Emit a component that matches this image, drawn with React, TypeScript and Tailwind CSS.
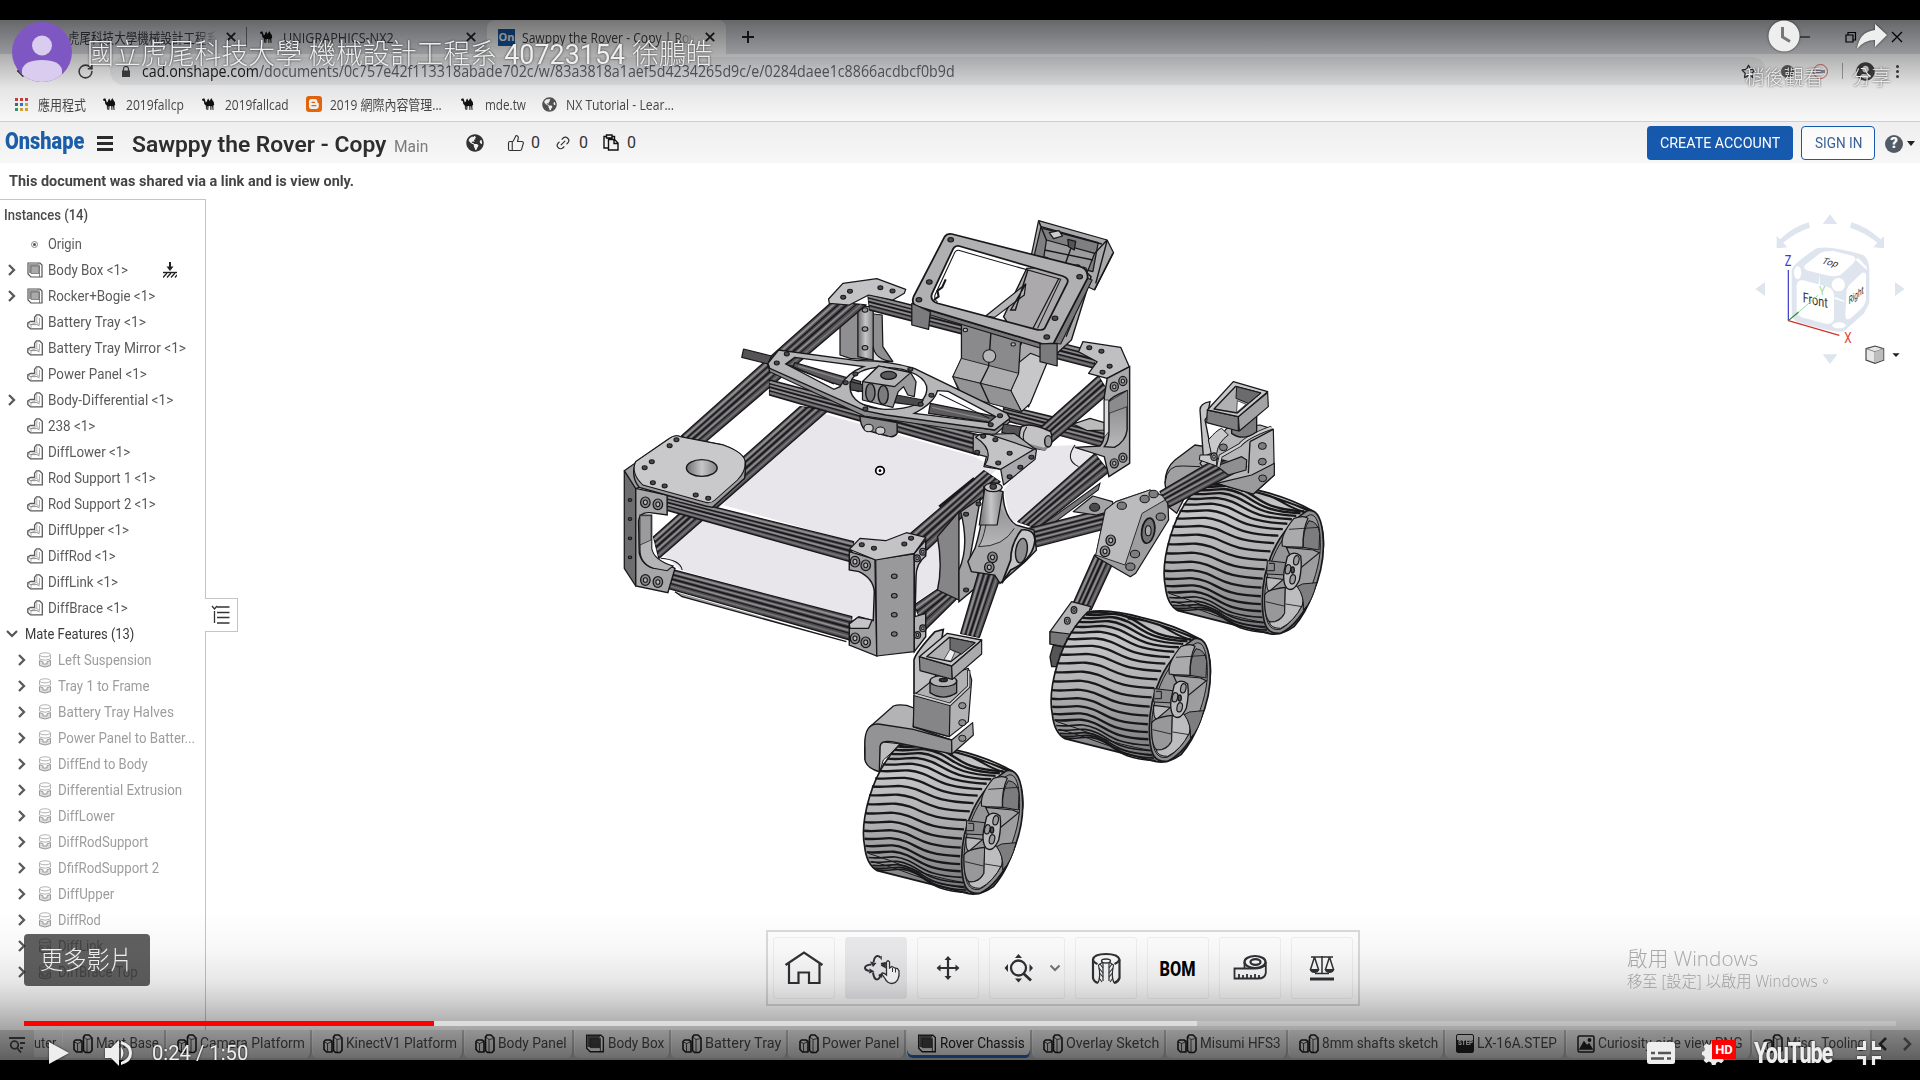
import { useLayoutEffect, useRef, useState } from "react";
import type { ReactNode } from "react";
import { FaGlobeAmericas, FaRegStar, FaUserCircle } from "react-icons/fa";
import { ThumbsUp, Link2, RotateCw, ArrowLeft } from "lucide-react";

/* A line of text condensed or widened to a given width. */
function Fit({ w, children, className = "" }: { w: number; children: ReactNode; className?: string }) {
  const ref = useRef<HTMLSpanElement>(null);
  const [s, setS] = useState(1);
  useLayoutEffect(() => {
    if (ref.current && ref.current.offsetWidth) setS(w / ref.current.offsetWidth);
  }, [w]);
  return (
    <span className={"block shrink-0 whitespace-nowrap " + className} style={{ width: w }}>
      <span ref={ref} className="inline-block origin-left whitespace-nowrap" style={{ transform: `scaleX(${s})` }}>
        {children}
      </span>
    </span>
  );
}

type P = [number, number];
const pts = (a: P[]) => a.map((p) => p.join(",")).join(" ");
const K = "#18171a";

function Poly({ p, f = "#a9a8aa", s = 3.5 }: { p: P[]; f?: string; s?: number }) {
  return <polygon points={pts(p)} fill={f} stroke={K} strokeWidth={s} strokeLinejoin="round" />;
}

/* Slotted aluminium extrusion: a-b and d-c are the long edges. */
function Beam({ a, b, c, d }: { a: P; b: P; c: P; d: P }) {
  const lerp = (u: P, v: P, t: number): P => [u[0] + (v[0] - u[0]) * t, u[1] + (v[1] - u[1]) * t];
  const lines: [number, string, number][] = [
    [0.13, "#8f8d90", 6], [0.25, K, 3.5], [0.36, "#8a888b", 4], [0.48, K, 5],
    [0.61, "#8f8d90", 5], [0.72, K, 3], [0.86, "#757376", 5],
  ];
  return (
    <g>
      <Poly p={[a, b, c, d]} f="#504e51" s={4} />
      {lines.map(([t, col, w], i) => {
        const u = lerp(a, d, t);
        const v = lerp(b, c, t);
        return <line key={i} x1={u[0]} y1={u[1]} x2={v[0]} y2={v[1]} stroke={col} strokeWidth={w} />;
      })}
    </g>
  );
}

function Holes({ p, r = 7, f = "#4a494b" }: { p: P[]; r?: number; f?: string }) {
  return (
    <g>
      {p.map(([x, y], i) => (
        <ellipse key={i} cx={x} cy={y} rx={r} ry={r * 0.85} fill={f} stroke={K} strokeWidth={3} />
      ))}
    </g>
  );
}

function Bolts({ p, r = 14 }: { p: P[]; r?: number }) {
  return (
    <g>
      {p.map(([x, y], i) => (
        <g key={i}>
          <ellipse cx={x} cy={y} rx={r * 0.95} ry={r * 1.15} fill="#8b898c" stroke={K} strokeWidth={3.5} />
          <ellipse cx={x} cy={y} rx={r * 0.4} ry={r * 0.5} fill="#bbb" stroke={K} strokeWidth={3} />
        </g>
      ))}
    </g>
  );
}

const bez = (p: P[], t: number): P => {
  const u = 1 - t;
  const k = [u * u * u, 3 * u * u * t, 3 * u * t * t, t * t * t];
  return [p.reduce((s, q, i) => s + q[0] * k[i], 0), p.reduce((s, q, i) => s + q[1] * k[i], 0)];
};

function Wheel({ x, y }: { x: number; y: number }) {
  const L: P[] = [[240, 556], [120, 650], [105, 880], [172, 932]];
  const R: P[] = [[556, 632], [430, 680], [388, 930], [446, 1001]];
  const n = 21;
  const treads = Array.from({ length: n }, (_, i) => {
    const s = (i + 0.5) / n;
    const t = s * 0.55 + ((1 - Math.cos(Math.PI * s)) / 2) * 0.45;
    const l = bez(L, t);
    const r = bez(R, t);
    const dx = r[0] - l[0];
    const dy = r[1] - l[1];
    const q = (a: number, b: number) => `${l[0] + dx * a} ${l[1] + dy * b}`;
    return {
      d: `M${q(0, 0)} C${q(0.2, 0.1)} ${q(0.24, -0.22)} ${q(0.43, 0.16)} C${q(0.58, 0.48)} ${q(0.62, 0.92)} ${q(1, 1)}`,
      w: s > 0.74 ? 5 : 7,
    };
  });
  return (
    <g transform={`translate(${x} ${y})`}>
      <path d="M240 552 C150 640 120 790 134 860 Q140 915 172 932 L446 1001 Q480 1008 520 980 Q590 900 608 740 Q612 670 575 632 Q500 590 400 568 Q300 540 240 552Z" fill="url(#tread)" stroke={K} strokeWidth={5} />
      {treads.map((t, i) => (
        <path key={i} d={t.d} fill="none" stroke={K} strokeWidth={t.w} />
      ))}
      <path d="M238 556 Q300 548 400 574 T582 642 M262 551 Q380 558 575 634 M360 572 Q430 575 480 604 T566 640" fill="none" stroke={K} strokeWidth={5.5} />
      <path d="M155 905 Q200 915 280 945 T440 985 M145 880 Q210 900 270 925 T432 968" fill="none" stroke={K} strokeWidth={3} />
      <path d="M560 632 C470 690 425 800 425 900 C425 990 445 1003 480 1000 C560 960 612 820 608 725 C606 660 590 625 560 632Z" fill="#8d8c8e" stroke={K} strokeWidth={5} />
      <path d="M566 645 C480 690 433 800 432 895 C432 975 450 992 478 988 C540 960 602 820 599 728 C598 675 588 640 566 645Z" fill="url(#rimg)" stroke={K} strokeWidth={3} />
      <path d="M485 738 Q478 705 520 655 Q550 645 562 655 Q545 690 547 742 L497 740Z" fill="#aaa9ab" stroke={K} strokeWidth={3.5} />
      <path d="M565 662 Q592 665 597 700 L595 750 L548 742 Q546 690 565 662Z" fill="#7c7b7d" stroke={K} strokeWidth={3} />
      <path d="M505 688 L595 682" stroke={K} strokeWidth={2.5} fill="none" />
      <path d="M497 742 L578 750 L596 758 L538 805 L510 770Z" fill="#a2a1a3" stroke={K} strokeWidth={3.5} />
      <path d="M440 782 L495 788 L498 825 L438 822Z" fill="#8a898b" stroke={K} strokeWidth={3} />
      <path d="M445 790 h16 v22 h-20" fill="none" stroke={K} strokeWidth={3} />
      <path d="M438 832 L488 838 L446 874 Q436 870 438 832Z" fill="#b9b8ba" stroke={K} strokeWidth={3.5} />
      <path d="M432 885 Q440 868 494 862 L492 940 Q475 968 448 966 Q430 955 432 885Z" fill="#98979a" stroke={K} strokeWidth={3.5} />
      <path d="M494 862 L530 858 Q552 890 545 915 Q520 965 480 985 Q450 985 446 966 Q480 968 492 940Z" fill="#bdbcbe" stroke={K} strokeWidth={3} />
      <path d="M545 852 L588 848 Q575 905 548 930 Q552 890 530 860Z" fill="#7d7c7e" stroke={K} strokeWidth={3} />
      <path d="M495 912 L545 920 M435 905 L490 918" stroke={K} strokeWidth={2.5} />
      <path d="M500 770 Q520 750 540 768 Q545 800 536 840 Q518 880 498 864 Q486 850 490 815Z" fill="#bab9bb" stroke={K} strokeWidth={4} />
      {[[527, 781], [502, 808], [516, 838]].map(([a, b]) => (
        <ellipse key={a} cx={a} cy={b} rx={8} ry={14} transform={`rotate(12 ${a} ${b})`} fill="#9d9c9e" stroke={K} strokeWidth={3.5} />
      ))}
      <ellipse cx={516} cy={810} rx={5} ry={9} fill="#555" stroke={K} strokeWidth={4} />
    </g>
  );
}

function Rover() {
  return (
    <svg viewBox="600 200 760 720" width={760} height={720} className="block">
      <defs>
        <linearGradient id="tread" x1="0" y1="0" x2="0.1" y2="1">
          <stop offset="0" stopColor="#969597" /><stop offset=".2" stopColor="#c6c5c7" />
          <stop offset=".55" stopColor="#afaeb0" /><stop offset="1" stopColor="#7a797b" />
        </linearGradient>
        <linearGradient id="rimg" x1="0" y1="0" x2="1" y2="1">
          <stop offset="0" stopColor="#8d8c8e" /><stop offset="1" stopColor="#a5a4a6" />
        </linearGradient>
        <linearGradient id="shade" x1="0" y1="0" x2="1" y2="0">
          <stop offset="0" stopColor="#6f6e70" /><stop offset=".5" stopColor="#c6c5c7" /><stop offset="1" stopColor="#858486" />
        </linearGradient>
        <linearGradient id="vert" x1="0" y1="0" x2="0" y2="1">
          <stop offset="0" stopColor="#828183" /><stop offset="1" stopColor="#b8b7b9" />
        </linearGradient>
      </defs>

      {/* chassis */}
      <g transform="translate(600 200) scale(.357143 .333333)">
        <polygon points="622,640 1050,770 1110,810 880,1020 720,1030 345,915 380,860" fill="#e8e6ea" />
        <polygon points="280,955 700,1085 770,1130 770,1270 225,1110 180,1065" fill="#e8e6ea" />
        <polygon points="1330,735 1390,775 1210,960 1150,965 1130,870 1220,740" fill="#e8e6ea" />
        <polygon points="880,1060 950,1020 950,1160 885,1205" fill="#e8e6ea" />
        <path d="M1330 735 Q1300 780 1340 800 M170 1075 Q225 1080 230 1110" fill="none" stroke={K} strokeWidth={3} />

        {/* rear-left post */}
        <Poly p={[[672, 330], [790, 345], [792, 440], [820, 485], [700, 475], [672, 465]]} f="#8f8e90" />
        <Poly p={[[722, 320], [765, 320], [765, 480], [722, 470]]} f="url(#shade)" />
        <path d="M765 440 Q770 480 820 485 L765 482Z" fill="#ddd" stroke={K} strokeWidth={3} />
        <Holes p={[[742, 330], [742, 387], [742, 443]]} r={8} f="#999" />

        <Beam a={[150, 1010]} b={[560, 620]} c={[640, 630]} d={[165, 1075]} />
        <Beam a={[228, 708]} b={[650, 305]} c={[745, 315]} d={[285, 735]} />
        <Beam a={[750, 282]} b={[1385, 455]} c={[1385, 505]} d={[755, 330]} />
        <Poly p={[[640, 297], [680, 250], [775, 236], [856, 268], [852, 280], [820, 300], [752, 285], [698, 315], [642, 310]]} f="#c3c2c4" />
        <Holes p={[[700, 274], [785, 263], [819, 273], [681, 292]]} />

        <Beam a={[475, 540]} b={[1060, 705]} c={[1060, 765]} d={[475, 585]} />
        <Beam a={[1130, 615]} b={[1420, 690]} c={[1420, 745]} d={[1130, 660]} />
        <Poly p={[[1325, 672], [1372, 655], [1412, 668], [1412, 690], [1365, 692]]} f="#bbb" />
        <Beam a={[1170, 965]} b={[1385, 762]} c={[1425, 815]} d={[1225, 985]} />
        <path d="M1225 985 L1400 850 L1395 870 L1250 985" fill="#777" stroke={K} strokeWidth={3} />
        <Beam a={[1215, 700]} b={[1395, 528]} c={[1425, 580]} d={[1262, 730]} />

        {/* rear-right corner */}
        <Poly p={[[1340, 455], [1352, 425], [1458, 442], [1482, 500], [1420, 535], [1368, 520], [1392, 485]]} f="#bfbec0" />
        <path d="M1420 535 L1483 500 L1483 790 L1425 830 L1412 770 L1330 742 L1400 738 Q1412 725 1412 700 L1412 590Z" fill="#a9a8aa" stroke={K} strokeWidth={4} />
        <path d="M1425 605 Q1430 590 1476 572 L1476 690 Q1472 725 1440 742 L1412 740 Q1425 722 1425 695Z" fill="url(#vert)" stroke={K} strokeWidth={4} />
        <path d="M1476 620 L1425 640 V605 L1476 572" fill="#8b8a8c" stroke={K} strokeWidth={2} />
        <path d="M1412 600 L1424 600 L1424 695 L1412 712Z" fill="#ddd" stroke={K} strokeWidth={2} />
        <Holes p={[[1370, 443], [1404, 454], [1427, 499], [1407, 517]]} />
        <Bolts p={[[1440, 560], [1464, 543], [1440, 790], [1464, 773]]} r={12} />

        {/* mast head */}
        <Poly p={[[1228, 62], [1420, 120], [1438, 158], [1385, 270], [1205, 180]]} f="#a9a8aa" />
        <Poly p={[[1235, 80], [1395, 128], [1380, 215], [1215, 170]]} f="#7f7e80" />
        <Poly p={[[1250, 120], [1385, 160], [1365, 215], [1240, 190]]} f="#9c9b9d" />
        <path d="M1228 62 L1250 120 M1420 120 L1385 160 M1420 122 L1388 250 M1436 160 L1385 268 M1325 125 L1300 200 M1245 150 L1380 180 M1240 85 L1405 132" fill="none" stroke={K} strokeWidth={4} />
        <Poly p={[[1258, 98], [1285, 92], [1295, 108], [1270, 116]]} f="#ccc" />
        <Poly p={[[1310, 118], [1332, 124], [1328, 150], [1312, 140]]} f="#555" />
        <Bolts p={[[1247, 185], [1353, 215]]} r={12} />
        <path d="M1195 205 L1340 195 L1375 230 L1320 420 L1240 500 L1200 620 L1120 560 L1180 430 L1130 350Z" fill="#aba9ac" stroke={K} strokeWidth={4} />
        <Poly p={[[1080, 348], [1192, 252], [1188, 285], [1105, 352]]} f="#b5b4b6" />
        <path d="M1192 252 L1150 330 L1163 330 L1198 210" fill="none" stroke={K} strokeWidth={4} />
        <path d="M1360 240 L1290 420 M1372 245 L1325 345 L1328 350 L1305 410 M1285 235 L1210 390" fill="none" stroke={K} strokeWidth={3.5} />

        {/* mast foot */}
        <Poly p={[[1170, 490], [1205, 460], [1255, 480], [1205, 610], [1180, 635], [1150, 575]]} f="#c7c6c8" />
        <Poly p={[[1012, 365], [1178, 415], [1172, 520], [1150, 572], [1180, 635], [1010, 585], [988, 530], [1012, 475]]} f="#8a898b" />
        <Poly p={[[1012, 475], [1172, 520], [1150, 572], [988, 530]]} f="#adacae" s={2.5} />
        <Poly p={[[988, 530], [1150, 572], [1180, 635], [1015, 588]]} f="#939294" s={2.5} />
        <path d="M1095 390 L1088 500 L1065 550 L1090 608" fill="none" stroke={K} strokeWidth={4} />
        <ellipse cx={1090} cy={468} rx={18} ry={19} fill="#b5b4b6" stroke={K} strokeWidth={3} />
        <Holes p={[[1023, 390], [1157, 433]]} r={6} f="#bbb" />

        {/* camera frame */}
        <path d="M882 318 L1240 432 L1235 445 L885 332Z M1365 235 L1378 240 L1290 432 L1270 430Z" fill="#777678" stroke={K} strokeWidth={3} />
        <path fillRule="evenodd" d="M985 102 L1345 200 Q1368 208 1365 235 L1270 430 L1240 432 L890 320 Q870 312 878 290 L965 110 Q972 100 985 102Z M1005 138 L1295 228 Q1315 235 1308 250 L1245 385 Q1238 393 1220 388 L945 310 Q922 300 930 280 L985 155 Q992 135 1005 138Z" fill="#b0afb1" stroke={K} strokeWidth={5} />
        <path d="M1004 151 L1290 238 L1225 385 M1004 151 Q995 150 990 165 L938 285 Q935 298 945 306" fill="none" stroke={K} strokeWidth={3} />
        <Holes p={[[982, 119], [922, 246], [893, 299], [1343, 230], [1274, 355], [1251, 411]]} r={8} />
        <path d="M935 300 L948 290 L945 272 L958 262 L968 238" fill="none" stroke={K} strokeWidth={6} />
        <Poly p={[[873, 310], [925, 335], [920, 388], [873, 375]]} f="#7b7a7c" />
        <Poly p={[[1232, 432], [1280, 430], [1280, 498], [1232, 485]]} f="#7b7a7c" />

        {/* differential */}
        <Poly p={[[402, 447], [480, 468], [470, 492], [397, 472]]} f="#555356" />
        <Poly p={[[545, 488], [730, 545], [725, 575], [650, 548], [540, 503]]} f="#5c5a5d" />
        <Poly p={[[925, 610], [1110, 650], [1095, 668], [920, 640]]} f="#5c5a5d" />
        <path d="M555 498 L700 545 M930 622 L1090 660" stroke="#858386" strokeWidth={4} />
        <path d="M470 492 L475 515 L740 648 L1105 705 L1148 665 L1140 650 L1105 690 L740 630Z" fill="#8d8c8e" stroke={K} strokeWidth={3.5} />
        <path fillRule="evenodd" d="M500 450 L720 482 Q800 480 880 505 L1140 640 L1148 655 L1105 690 L800 645 L740 632 L475 505 L470 490Z M520 492 L545 472 L738 500 Q690 520 672 560 L655 568Z M700 560 C700 520 745 500 800 502 C870 504 918 535 915 570 C912 610 870 628 800 628 C740 626 700 600 700 560Z M880 640 Q935 610 945 572 L975 574 L1108 650 L1088 668Z" fill="#b6b5b7" stroke={K} strokeWidth={4} />
        <path d="M530 495 L655 552 M950 582 L1090 655" fill="none" stroke={K} strokeWidth={3} />
        <Poly p={[[700, 545], [740, 555], [738, 575], [702, 570]]} f="#4c4a4d" />
        <Poly p={[[830, 585], [905, 600], [895, 618], [825, 608]]} f="#4c4a4d" />
        <Poly p={[[735, 545], [780, 498], [870, 518], [885, 545], [880, 590], [862, 585], [850, 560], [835, 575], [820, 622], [735, 600]]} f="#9a999b" />
        <Poly p={[[735, 545], [780, 498], [870, 518], [825, 560]]} f="#b5b4b6" />
        <ellipse cx={808} cy={526} rx={22} ry={12} fill="#59585a" stroke={K} strokeWidth={4} />
        <ellipse cx={757} cy={578} rx={13} ry={27} fill="#7b7a7c" stroke={K} strokeWidth={4} />
        <ellipse cx={793} cy={585} rx={14} ry={28} fill="#7b7a7c" stroke={K} strokeWidth={4} />
        <path d="M728 648 L832 668 V700 Q822 715 805 708 L742 690 Q728 675 728 648Z" fill="#8b8a8c" stroke={K} strokeWidth={4} />
        <Holes p={[[523, 462], [495, 489], [715, 522], [688, 548], [869, 508], [928, 586], [898, 613], [743, 627], [1120, 647], [1094, 674]]} />
        <Holes p={[[752, 684], [785, 692]]} r={13} f="#ccc" />
        <Poly p={[[1130, 672], [1185, 682], [1175, 710], [1125, 697]]} f="#555356" />
        <path d="M1180 680 Q1205 665 1262 695 Q1272 725 1245 750 L1190 740 Q1165 715 1180 680Z" fill="#c3c2c4" stroke={K} strokeWidth={4} />
        <path d="M1200 735 L1245 748 L1262 725" stroke="#8b8a8c" strokeWidth={8} fill="none" />
        <ellipse cx={1255} cy={724} rx={10} ry={17} fill="#999" stroke={K} strokeWidth={4} />
        <path d="M1195 680 Q1175 710 1195 740" fill="none" stroke={K} strokeWidth={3} />

        {/* right-hand rail and side joint */}
        <Beam a={[870, 1000]} b={[1075, 812]} c={[1120, 845]} d={[915, 1050]} />
        <path d="M950 920 L1048 835" stroke={K} strokeWidth={8} />
        <Poly p={[[1045, 705], [1160, 700], [1222, 750], [1218, 778], [1130, 855], [1122, 808], [1075, 800], [1082, 770], [1045, 760]]} f="#a9a8aa" />
        <path d="M1052 712 Q1060 700 1090 703 L1215 748 L1122 808 L1078 795 Q1105 750 1052 712Z" fill="#c3c2c4" stroke={K} strokeWidth={3.5} />
        <Holes p={[[1073, 709], [1107, 719], [1147, 760], [1115, 789], [1208, 772], [1177, 802], [1147, 830], [1056, 757]]} />
        <Beam a={[880, 1215]} b={[970, 1150]} c={[1000, 1195]} d={[910, 1290]} />
        <path d="M1005 935 L945 1010 Q960 1100 945 1170 L1005 1200Z" fill="#858486" stroke={K} strokeWidth={4} />
        <path d="M1065 895 L1010 935 Q1035 1040 1005 1110 L1005 1205 L1050 1165 L1060 1120 L1035 1080Z" fill="#a3a2a4" stroke={K} strokeWidth={4} />
        <Holes p={[[1025, 943], [1060, 912], [1025, 1170]]} />

        {/* suspension arms */}
        <Beam a={[1200, 985]} b={[1420, 925]} c={[1420, 985]} d={[1205, 1045]} />
        <Beam a={[1062, 1110]} b={[1010, 1300]} c={[1062, 1312]} d={[1128, 1110]} />
        <Beam a={[1385, 1065]} b={[1325, 1210]} c={[1375, 1230]} d={[1440, 1080]} />
        <path d="M1075 860 L1128 875 Q1130 950 1165 975 L1215 990 L1222 1050 L1190 1085 L1120 1150 L1105 1125 L1040 1115 L1030 1085 L1050 1045 Q1075 960 1075 860Z" fill="#a9a8aa" stroke={K} strokeWidth={4} />
        <path d="M1090 870 Q1085 1000 1060 1040 Q1130 1040 1160 985" fill="url(#vert)" stroke={K} strokeWidth={2.5} />
        <Poly p={[[1078, 860], [1128, 875], [1112, 975], [1062, 975]]} f="url(#shade)" />
        <ellipse cx={1101} cy={862} rx={25} ry={13} fill="#c6c5c7" stroke={K} strokeWidth={4} />
        <Holes p={[[1101, 860]]} r={9} />
        <path d="M1180 990 Q1215 985 1218 1020 Q1212 1080 1150 1110 L1125 1150 L1150 1080 Q1150 1030 1180 990Z" fill="#c6c5c7" stroke={K} strokeWidth={5} />
        <ellipse cx={1180} cy={1052} rx={16} ry={37} transform="rotate(8 1180 1052)" fill="#8d8c8e" stroke={K} strokeWidth={4} />
        <Bolts p={[[1099, 1072], [1090, 1102]]} />

        <Poly p={[[1325, 935], [1380, 888], [1435, 905], [1440, 930], [1390, 945]]} f="#a4a3a5" />
        <Holes p={[[1385, 922]]} r={14} />
        <Poly p={[[1415, 930], [1445, 905], [1540, 870], [1590, 895], [1592, 960], [1500, 1120], [1485, 1130], [1388, 1070]]} f="#9e9da0" />
        <Poly p={[[1415, 930], [1445, 905], [1540, 870], [1590, 895], [1518, 940], [1470, 1095], [1388, 1065]]} f="#bbbabc" s={2.5} />
        <ellipse cx={1535} cy={992} rx={18} ry={38} transform="rotate(8 1535 992)" fill="#737274" stroke={K} strokeWidth={5} />
        <ellipse cx={1535} cy={992} rx={8} ry={15} fill="#aaa" stroke={K} strokeWidth={3} />
        <Bolts p={[[1430, 1021], [1414, 1054]]} />
        <Holes p={[[1461, 917], [1525, 897], [1550, 882], [1498, 1062], [1485, 1100], [1570, 950]]} r={13} f="#7d7c7e" />

        {/* front-left post */}
        <Beam a={[185, 885]} b={[710, 1025]} c={[700, 1085]} d={[185, 930]} />
        <path d="M210 1175 L230 1190 L690 1325" stroke={K} strokeWidth={4} fill="#999" />
        <Beam a={[190, 1105]} b={[705, 1250]} c={[700, 1320]} d={[190, 1165]} />
        <Poly p={[[68, 812], [100, 860], [100, 1158], [68, 1105]]} f="#6d6c6e" />
        <path fillRule="evenodd" d="M100 865 L188 885 V945 L140 938 Q110 935 108 965 L110 1060 Q120 1100 155 1105 L190 1095 L210 1105 L190 1178 L100 1158Z" fill="#a7a6a8" stroke={K} strokeWidth={4} />
        <path d="M112 945 L145 945 L145 1045 Q150 1080 205 1098 L188 1112 L150 1105 Q112 1090 112 1050Z" fill="#b5b4b6" stroke={K} strokeWidth={3} />
        <Poly p={[[112, 947], [143, 947], [143, 1020], [112, 1035]]} f="#9b9a9c" s={2} />
        <Holes p={[[84, 900], [84, 957], [84, 1015], [84, 1072]]} r={5} />
        <Bolts p={[[127, 907], [162, 913], [127, 1140], [162, 1146]]} />
        <Poly p={[[68, 812], [98, 790], [110, 862], [100, 866]]} f="#9d9c9e" />
        <path d="M100 785 L195 715 Q210 703 225 710 L345 735 Q410 760 408 800 L405 835 L315 922 L295 918 L110 862 Q85 830 100 785Z" fill="#9d9c9e" stroke={K} strokeWidth={4} />
        <path d="M100 785 L195 715 Q210 703 225 710 L345 735 Q410 760 406 790 Q408 815 385 840 L322 900 Q310 912 295 907 L120 855 Q85 820 100 785Z" fill="#c9c8ca" stroke={K} strokeWidth={3} />
        <ellipse cx={285} cy={804} rx={43} ry={25} fill="url(#shade)" stroke={K} strokeWidth={4} />
        <Holes p={[[214, 719], [195, 737], [145, 785], [125, 803], [148, 848], [181, 858], [268, 885], [303, 895]]} />

        {/* front-right post */}
        <path d="M698 1055 L770 1078 L775 1368 L698 1335 L698 1270 L725 1250 L765 1262 L768 1175 Q765 1135 725 1115 L698 1110Z" fill="#a1a0a2" stroke={K} strokeWidth={4} />
        <Poly p={[[698, 1272], [722, 1252], [762, 1260], [752, 1285], [700, 1285]]} f="#c4c3c5" />
        <Poly p={[[772, 1078], [880, 1062], [880, 1355], [775, 1368]]} f="#99989a" />
        <path d="M880 1060 L912 1020 L912 1068 Q885 1090 885 1130 L882 1250 L912 1240 L912 1310 L880 1355Z" fill="#b3b2b4" stroke={K} strokeWidth={4} />
        <Poly p={[[698, 1048], [728, 1015], [800, 1022], [858, 998], [912, 1012], [880, 1060], [772, 1080]]} f="#c3c2c4" />
        <Holes p={[[733, 1034], [767, 1045], [852, 1032], [871, 1015]]} />
        <Holes p={[[824, 1129], [824, 1187], [824, 1244], [824, 1302]]} r={8} f="#777" />
        <Bolts p={[[714, 1085], [744, 1096], [714, 1315], [744, 1327]]} />
        <Bolts p={[[888, 1075], [904, 1055], [889, 1305], [904, 1285]]} r={9} />

        <ellipse cx={784} cy={812} rx={12} ry={12} fill="#fff" stroke="#000" strokeWidth={5} />
        <circle cx={784} cy={812} r={4} fill="#000" />
      </g>

      {/* rear steering bracket */}
      <g transform="translate(1100 360) scale(.333333)">
        <path d="M195 370 Q195 325 225 300 L285 255 L330 262 L330 370 L260 400 L230 460 L205 440Z" fill="#a09fa1" stroke={K} strokeWidth={4} />
        <path d="M195 370 Q200 312 250 318 L300 320" fill="none" stroke={K} strokeWidth={3} />
      </g>
      <g transform="translate(820 560) scale(.333333)">
        <Wheel x={902} y={-780} />
      </g>
      <g transform="translate(1100 360) scale(.333333)">
        <Poly p={[[330, 270], [380, 205], [480, 195], [520, 208], [523, 345], [460, 402], [350, 370], [300, 310]]} f="#b7b6b8" />
        <Poly p={[[350, 370], [455, 345], [523, 310], [523, 345], [460, 402]]} f="#9a999b" />
        <path d="M450 245 L520 208 M450 245 L445 340" stroke={K} strokeWidth={4} fill="none" />
        <Holes p={[[487, 258], [487, 305], [488, 355], [370, 262]]} r={12} f="#7d7c7e" />
        <Beam a={[180, 395]} b={[350, 295]} c={[440, 320]} d={[210, 440]} />
        <Poly p={[[350, 318], [425, 290], [440, 300], [438, 330], [385, 345]]} f="#8f8e90" />
        <path d="M355 320 L362 288 L420 255 Q440 230 515 203" stroke={K} strokeWidth={12} fill="none" />
        <path d="M355 320 L362 288 L420 255 Q440 230 515 203" stroke="#cfcecf" strokeWidth={7} fill="none" />
        <path d="M300 150 Q300 130 330 125 L322 170 L315 180 L335 280 L310 290Z" fill="#c5c4c6" stroke={K} strokeWidth={4} />
        <path d="M335 285 L325 240 Q350 210 365 205 L385 225 Q355 245 350 280 L350 318 L298 300 L300 285Z" fill="#c9c8ca" stroke={K} strokeWidth={3} />
        <Bolts p={[[342, 290]]} r={10} />
        <path d="M395 180 V220 Q430 245 470 215 V170Z" fill="#7d7c7e" stroke={K} strokeWidth={4} />
        <Poly p={[[322, 150], [415, 170], [415, 213], [320, 188]]} f="#7f7e80" />
        <Poly p={[[415, 170], [503, 98], [505, 140], [418, 213]]} f="#a3a2a4" />
        <Poly p={[[322, 150], [400, 65], [503, 95], [415, 170]]} f="#c9c8ca" s={4} />
        <Poly p={[[342, 147], [407, 79], [482, 99], [412, 159]]} f="#b0afb1" s={4} />
        <Poly p={[[410, 80], [482, 99], [445, 130], [408, 115]]} f="#6b6a6c" s={3} />
        <Poly p={[[410, 157], [412, 122], [438, 133]]} f="#fff" s={2} />
      </g>

      <g transform="translate(820 560) scale(.333333)">
        {/* middle wheel */}
        <Poly p={[[690, 215], [755, 125], [812, 140], [800, 175], [735, 255], [690, 252]]} f="#b5b4b6" />
        <Poly p={[[690, 215], [750, 222], [730, 260], [690, 252]]} f="#777678" />
        <path d="M700 255 L735 262 L720 320 L695 320 L690 290Z" fill="#555456" stroke={K} strokeWidth={4} />
        <Bolts p={[[762, 150], [742, 182]]} r={9} />
        <Wheel x={563} y={-396} />

        {/* front wheel and fork */}
        <path d="M135 600 Q130 520 150 500 L220 438 Q235 432 260 436 L285 445 L280 500 L395 540 L398 582 L180 545 L178 635 Q135 620 135 560Z" fill="#b3b2b4" stroke={K} strokeWidth={4} />
        <path d="M178 640 L180 545 L245 552 L190 600Z" fill="#bdbcbe" stroke={K} strokeWidth={3} />
        <Wheel x={0} y={0} />
        <path d="M135 565 Q130 490 175 492 L280 508 L395 540 L396 582 L215 545 Q182 540 180 560 L178 635 Q140 625 135 600Z" fill="#939294" stroke={K} strokeWidth={4} />
        <Poly p={[[395, 540], [458, 488], [460, 525], [396, 582]]} f="#a9a8aa" />
        <path d="M282 300 Q285 280 345 215 L370 208 L345 360 L300 400 L282 400Z" fill="#c0bfc1" stroke={K} strokeWidth={5} />
        <Poly p={[[282, 405], [345, 355], [445, 325], [455, 360], [445, 485], [388, 530], [280, 500]]} f="#b2b1b3" />
        <Poly p={[[282, 405], [390, 435], [388, 530], [280, 500]]} f="#858486" />
        <path d="M282 403 L390 433 L446 380 V330" stroke={K} strokeWidth={10} fill="none" />
        <path d="M284 403 L390 433 L446 380 V332" stroke="#cfcecf" strokeWidth={5} fill="none" />
        <Holes p={[[427, 437], [427, 488], [427, 535]]} r={11} f="#8d8c8e" />
        <path d="M330 365 V398 Q370 425 410 398 V362Z" fill="#838284" stroke={K} strokeWidth={4} />
        <ellipse cx={370} cy={363} rx={40} ry={17} fill="#b5b4b6" stroke={K} strokeWidth={4} />
        <ellipse cx={370} cy={360} rx={12} ry={5} fill="#333" stroke={K} strokeWidth={4} />
        <Poly p={[[298, 290], [395, 318], [397, 358], [300, 332]]} f="#858486" />
        <Poly p={[[395, 318], [485, 240], [485, 282], [397, 358]]} f="#aaa9ab" />
        <Poly p={[[298, 290], [382, 220], [485, 240], [395, 318]]} f="#c9c8ca" s={4} />
        <Poly p={[[320, 290], [388, 232], [465, 248], [392, 305]]} f="#b0afb1" s={4} />
        <Poly p={[[390, 233], [465, 248], [425, 282], [390, 268]]} f="#6b6a6c" s={3} />
        <Poly p={[[372, 299], [390, 268], [405, 276], [393, 303]]} f="#eee" s={2} />
      </g>
    </svg>
  );
}

function PartIcon() {
  return (
    <svg viewBox="0 0 16 16" className="h-4 w-4 shrink-0" fill="none" stroke="#5a5a5a" strokeWidth={1.3} strokeLinejoin="miter">
      <path d="M7.600 6.500V3.200L9.500.8H12.600L15.300 3.500V14.800H3.500L.8 12.500V8.800L3.500 7.500H7.600Z" fill="#fff" />
      <path d="M9.800 1.500V8.500L4 10.500V14.500M9.800 8.500L12.500 10.800V4" stroke="#a5a5a5" strokeWidth={0.9} />
      <path d="M1 9L3.800 10.600H10L12.500 12" stroke="#777" strokeWidth={0.8} />
    </svg>
  );
}
function AsmIcon({ dark = false }: { dark?: boolean }) {
  return (
    <svg viewBox="0 0 16 16" className={dark ? "h-[19px] w-[20px] shrink-0" : "h-4 w-4 shrink-0"} fill="none" stroke={dark ? "#222" : "#555"} strokeWidth={1.2}>
      <path d="M1 1 H13 L15 3 V15 H4 L1 12Z" fill="#fff" />
      <rect x="1.500" y="1.500" width="10" height="9.500" fill={dark ? "#555" : "#999"} stroke="none" />
      <path d="M4 4 H12 V11.500 H4Z" fill={dark ? "#444" : "#aaa"} strokeWidth={0.6} />
      <path d="M11.500 1 L12.500 4 V15" strokeWidth={0.7} />
    </svg>
  );
}
function StudioIcon() {
  return (
    <svg viewBox="0 0 20 20" className="h-5 w-5 shrink-0" fill="none" stroke="#1d1d1d" strokeWidth={1.6} strokeLinejoin="round">
      <path d="M1 7.500 L2.500 6 H7 L9 7.500 V18 H3.500 L1 15.500Z" /><path d="M1.500 8L4.500 9.500V17.500M4.500 9.500L8.500 8" strokeWidth={0.8} />
      <path d="M10.500 3 L12 1 H16 L19 4 V16.500 L17 18.500 H12.500 L10.500 16.500Z" /><path d="M11 3L14 5.500V18M14 5.500L18.500 4.500" strokeWidth={0.8} />
    </svg>
  );
}
function MateIcon() {
  return (
    <svg viewBox="0 0 14 16" className="h-4 w-[14px] shrink-0" fill="none" stroke="#b3b3b3" strokeWidth={1}>
      <ellipse cx="7" cy="2.800" rx="5.500" ry="2" />
      <path d="M1.500 3 V7 Q7 9.500 12.500 7 V3" />
      <path d="M1.500 8.500 L5 9.800 V12 H9 V9.800 L12.500 8.500 V13.500 Q7 16.500 1.500 13.500Z" fill="#dedede" stroke="#999" />
    </svg>
  );
}
function Chevron() {
  return (
    <svg viewBox="0 0 8 12" className="-mt-px h-3 w-2 shrink-0" fill="none" stroke="#5a5a5a" strokeWidth={2.3}>
      <path d="M1 1 L6 6 L1 11" />
    </svg>
  );
}
const Camel = () => (
  <svg viewBox="0 0 13 12" className="h-3 w-[13px] shrink-0" fill="#111">
    <path d="M0 1.500L1 .5H2.500L3.200 2.500L3.800 4.500L4.800 3.500L5.500 1.500L6.300 .6L7.200 2.500L8 2.800L8.600 1L9.600 .3L10.600 2.500L11.800 4L12.200 7L11.300 7.500L11.500 12H10.600L10.200 8.500L9.400 8V12H8.500L8.200 8H6.600L6.200 12H5.300L5.400 8.500L4.800 8V11.500H4L3.800 7.500L2.300 6L1.800 3L.2 2.600Z" />
  </svg>
);
const Caret = () => <span className="block h-0 w-0 border-x-4 border-t-[5px] border-x-transparent border-t-[#222]" />;
const X = () => (
  <svg viewBox="0 0 10 10" className="h-[10px] w-[10px] shrink-0" stroke="#222" strokeWidth={1.8}><path d="M.8 .8 L9.200 9.200 M9.200 .8 L.8 9.200" /></svg>
);

const instances: [string, number, string, boolean][] = [
  ["Body Box <1>", 80, "asm", true],
  ["Rocker+Bogie <1>", 107, "asm", true],
  ["Battery Tray <1>", 98, "part", false],
  ["Battery Tray Mirror <1>", 138, "part", false],
  ["Power Panel <1>", 99, "part", false],
  ["Body-Differential <1>", 125, "part", true],
  ["238 <1>", 47, "part", false],
  ["DiffLower <1>", 82, "part", false],
  ["Rod Support 1 <1>", 108, "part", false],
  ["Rod Support 2 <1>", 108, "part", false],
  ["DiffUpper <1>", 81, "part", false],
  ["DiffRod <1>", 68, "part", false],
  ["DiffLink <1>", 70, "part", false],
  ["DiffBrace <1>", 80, "part", false],
];
const mates: [string, number][] = [
  ["Left Suspension", 94], ["Tray 1 to Frame", 92], ["Battery Tray Halves", 116], ["Power Panel to Batter...", 137],
  ["DiffEnd to Body", 90], ["Differential Extrusion", 124], ["DiffLower", 57], ["DiffRodSupport", 90],
  ["DfifRodSupport 2", 101], ["DiffUpper", 56], ["DiffRod", 43], ["DiffLink", 45], ["DiffBrace Top", 80],
];
const tabs: [string, number, string][] = [
  ["Mast Base", 104, "st"], ["Camera Platform", 146, "st"], ["KinectV1 Platform", 152, "st"], ["Body Panel", 110, "st"],
  ["Body Box", 97, "asm"], ["Battery Tray", 117, "st"], ["Power Panel", 118, "st"], ["Rover Chassis", 126, "asm"],
  ["Overlay Sketch", 134, "st"], ["Misumi HFS3", 122, "st"], ["8mm shafts sketch", 157, "st"], ["LX-16A.STEP", 121, "step"],
  ["Curiosity side view.PNG", 186, "img"], ["Misc. Tooling", 120, "st"],
];

function BrowserChrome() {
  return (
    <>
      <div className="flex h-[34px] items-center bg-[#dee1e6] text-[14px] text-[#3c4043]">
        <Fit w={150} className="ml-[68px] [mask-image:linear-gradient(to_right,black_85%,transparent)]">虎尾科技大學機械設計工程系</Fit>
        <div className="ml-[8px]"><X /></div>
        <div className="ml-[10px] h-5 w-px bg-[#777]" />
        <div className="ml-[13px]"><Camel /></div>
        <Fit w={111} className="ml-[10px]">UNIGRAPHICS-NX2</Fit>
        <div className="ml-[72px]"><X /></div>
        <div className="ml-[11px] flex h-full w-[239px] items-center rounded-t-lg bg-white">
          <div className="ml-[11px] flex h-[17px] w-[17px] items-center justify-center bg-[#155aa8] text-[11px] font-bold text-white">On</div>
          <Fit w={173} className="ml-[7px] [mask-image:linear-gradient(to_right,black_88%,transparent)]">Sawppy the Rover - Copy | Rov</Fit>
          <div className="ml-[10px]"><X /></div>
        </div>
        <svg viewBox="0 0 12 12" className="ml-[16px] h-3 w-3" stroke="#222" strokeWidth={2}><path d="M6 0V12M0 6H12" /></svg>
        <svg viewBox="0 0 104 14" className="mr-[16px] ml-auto h-[14px] w-[104px]" fill="none" stroke="#000" strokeWidth={1.2}>
          <path d="M0 7H10 M46 5h7v7h-7z M48 5V2.500h7.500V10H53 M92 2l10 10M102 2L92 12" />
        </svg>
      </div>
      <div className="flex h-[34px] items-center bg-white">
        <ArrowLeft size={18} className="ml-[14px] text-[#444]" />
        <RotateCw size={17} strokeWidth={2.200} className="ml-[45px] text-[#444]" />
        <div className="ml-[16px] flex h-7 w-[1656px] items-center rounded-full bg-[#f0f1f3] text-[17px]">
          <svg viewBox="0 0 8 11" className="ml-[12px] h-[11px] w-2" fill="#444"><path d="M0 4.500h8V11H0z" /><path d="M1.500 5V3a2.500 2.500 0 015 0v2" fill="none" stroke="#444" strokeWidth={1.2} /></svg>
          <Fit w={813} className="ml-[12px] text-[#5f6368]">
            <span className="text-[#202124]">cad.onshape.com</span>/documents/0c757e42f113318abade702c/w/83a3818a1aef5d4234265d9c/e/0284daee1c8866acdbcf0b9d
          </Fit>
          <FaRegStar size={15} className="mr-[10px] ml-auto text-[#333]" />
        </div>
        <div className="ml-[15px] h-[13px] w-[13px] rounded-full bg-[#666]" />
        <div className="ml-[19px] flex h-[15px] w-[15px] items-center justify-center rounded-full border border-[#d66]"><div className="h-[3px] w-[9px] bg-[#99a]" /></div>
        <div className="ml-[14px] h-4 w-px bg-[#aaa]" />
        <FaUserCircle size={19} className="ml-[13px] text-[#444]" />
        <div className="ml-[21px] flex flex-col gap-[2px]"><i className="block h-[3px] w-[3px] rounded-full bg-[#444]" /><i className="block h-[3px] w-[3px] rounded-full bg-[#444]" /><i className="block h-[3px] w-[3px] rounded-full bg-[#444]" /></div>
      </div>
      <div className="flex h-[34px] items-center border-b border-[#d4d4d4] bg-white pb-px text-[14px] text-[#4a4a4a]">
        <div className="ml-[15px] grid grid-cols-3 gap-[2px]">
          {["bg-[#c44]", "bg-[#c44]", "bg-[#c44]", "bg-[#475]", "bg-[#37c]", "bg-[#da3]", "bg-[#397]", "bg-[#da3]", "bg-[#da3]"].map((c, i) => (
            <i key={i} className={"block h-[3px] w-[3px] " + c} />
          ))}
        </div>
        <Fit w={48} className="ml-[10px]">應用程式</Fit>
        <div className="ml-[17px]"><Camel /></div>
        <Fit w={58} className="ml-[10px]">2019fallcp</Fit>
        <div className="ml-[18px]"><Camel /></div>
        <Fit w={64} className="ml-[10px]">2019fallcad</Fit>
        <div className="ml-[17px] flex h-4 w-4 items-center justify-center rounded-[3px] bg-[#f26b0c]">
          <svg viewBox="0 0 10 10" className="h-[10px] w-[10px]"><path d="M2.500 0H6Q8.500 0 8.500 3.500L9.800 4.500V7Q9.800 10 7 10H2.500Q0 10 0 7.500V2.500Q0 0 2.500 0Z" fill="#fff" /><path d="M3 3.300H5.500M3 6.700H6.800" stroke="#f26b0c" strokeWidth={1.3} strokeLinecap="round" /></svg>
        </div>
        <Fit w={112} className="ml-[8px]">2019 網際內容管理...</Fit>
        <div className="ml-[19px]"><Camel /></div>
        <Fit w={41} className="ml-[11px]">mde.tw</Fit>
        <FaGlobeAmericas size={15} className="ml-[16px] text-[#555]" />
        <Fit w={108} className="ml-[9px]">NX Tutorial - Lear...</Fit>
      </div>
    </>
  );
}

function Header() {
  return (
    <div className="flex h-[41px] shrink-0 items-center bg-[#f6f6f7] font-[Roboto,'Liberation_Sans',sans-serif] text-[#333]">
      <Fit w={79} className="-mt-px ml-[5px] text-[23px] font-black text-[#1b5faa]">Onshape</Fit>
      <div className="mt-[2px] ml-[13px] flex w-4 flex-col gap-[3px]">
        <i className="block h-[3px] bg-[#2b2b2b]" /><i className="block h-[3px] bg-[#2b2b2b]" /><i className="block h-[3px] bg-[#2b2b2b]" />
      </div>
      <Fit w={254} className="mt-1 ml-[19px] text-[22px] font-semibold text-[#2e2e2e]">Sawppy the Rover - Copy</Fit>
      <Fit w={34} className="mt-2 ml-[8px] text-[16px] text-[#7c7c7c]">Main</Fit>
      <FaGlobeAmericas size={18} className="mt-px ml-[38px] text-[#333]" />
      <ThumbsUp size={18} strokeWidth={1.500} className="ml-[23px]" />
      <span className="mt-px ml-[6px] w-6 text-[16px]">0</span>
      <Link2 size={16} strokeWidth={1.800} className="-rotate-45" />
      <span className="mt-px ml-[8px] w-6 text-[16px]">0</span>
      <svg viewBox="0 0 16 17" className="h-[17px] w-4" fill="none" stroke="#111" strokeWidth={1.400}><path d="M5.500 14H1V2.500H3.500M9 2.500H11.500V5M3.500 1h5.500v3H3.500zM5.500 5.500h6L15 9v7H5.500zM11 6v3.500h4" /></svg>
      <span className="mt-px ml-[8px] text-[16px]">0</span>
      <div className="mt-px ml-auto flex h-[34px] w-[146px] items-center justify-center rounded bg-[#165ab0] text-[15px] text-white"><Fit w={120}>CREATE ACCOUNT</Fit></div>
      <div className="mt-px ml-2 flex h-[34px] w-[74px] items-center justify-center rounded border border-[#165ab0] bg-white text-[15px] text-[#3a6298]"><Fit w={47}>SIGN IN</Fit></div>
      <div className="mt-[2px] ml-[10px] flex h-[18px] w-[18px] items-center justify-center rounded-full bg-[#555b63] text-[15px] leading-none font-black text-white">?</div>
      <div className="mt-[2px] mr-[5px] ml-[4px]"><Caret /></div>
    </div>
  );
}

function Sidebar() {
  return (
    <div className="h-[831px] w-[206px] shrink-0 border-t border-r border-[#c4c4c4] font-[Roboto,'Liberation_Sans',sans-serif] text-[14px] text-[#5a5a5a]">
      <div className="flex h-[31px] items-center pl-[4px] font-medium text-[#4a4a4a]"><Fit w={84}>Instances (14)</Fit></div>
      <div className="flex h-[26px] items-center">
        <div className="ml-[31px] flex h-[7px] w-[7px] items-center justify-center rounded-full border border-[#888]"><i className="block h-[3px] w-[3px] rounded-full bg-[#555]" /></div>
        <Fit w={34} className="ml-[10px]">Origin</Fit>
      </div>
      {instances.map(([n, w, k, open], i) => (
        <div key={i} className="flex h-[26px] items-center">
          <div className="ml-[8px] w-[19px]">{open && <Chevron />}</div>
          {k === "asm" ? <AsmIcon /> : <PartIcon />}
          <Fit w={w} className="ml-[5px]">{n}</Fit>
          {i === 0 && (
            <svg viewBox="0 0 14 16" className="ml-[35px] h-4 w-[14px]" stroke="#222" fill="none"><path d="M7 0V6" strokeWidth={2} /><path d="M3.500 4.500h7L7 9z" fill="#222" stroke="none" /><path d="M0 10.500H14" strokeWidth={1.400} /><path d="M0 15.500L4 11M4 15.500L8 11M8 15.500L12 11M12 15.500L14 13" strokeWidth={1.300} /></svg>
          )}
        </div>
      ))}
      <div className="flex h-[26px] items-center text-[#3a3a3a]">
        <svg viewBox="0 0 12 8" className="ml-[6px] h-2 w-3" fill="none" stroke="#555" strokeWidth={2.200}><path d="M1 1L6 6L11 1" /></svg>
        <Fit w={109} className="ml-[7px]">Mate Features (13)</Fit>
      </div>
      {mates.map(([n, w]) => (
        <div key={n} className="flex h-[26px] items-center text-[#9d9d9d]">
          <div className="ml-[18px] w-[20px]"><Chevron /></div>
          <MateIcon />
          <Fit w={w} className="ml-[6px]">{n}</Fit>
        </div>
      ))}
    </div>
  );
}

function ViewCube() {
  return (
    <svg viewBox="1050 630 480 480" className="h-[160px] w-[160px]" fill="none">
      <g fill="#dfe5ef">
        <path d="M1290 643l22 29h-44zM1290 1092l22-29h-44zM1066 867l29-21v42zM1514 867l-29-21v42z" />
        <path d="M1226 667L1230 683Q1190 695 1150 728L1162 742L1130 745V708L1140 718Q1180 680 1226 667Z" />
        <path d="M1354 667L1350 683Q1390 695 1432 728L1420 742L1452 745V708L1442 718Q1400 680 1354 667Z" />
        <path d="M1175 810Q1180 790 1250 745Q1290 735 1390 765Q1408 780 1408 810V910L1392 940L1330 995Q1300 998 1190 965Q1175 955 1175 940Z" />
      </g>
      <g fill="#fff">
        <path d="M1215 795L1260 760Q1275 752 1300 753L1360 768Q1372 778 1360 790L1325 822Q1315 830 1290 828L1225 812Q1208 808 1215 795Z" />
        <path d="M1190 855Q1192 838 1210 841L1282 860Q1302 868 1302 885V955Q1300 973 1280 972L1205 952Q1190 945 1190 930Z" />
        <path d="M1340 870Q1345 855 1358 845L1385 820Q1398 812 1398 830V900Q1395 915 1382 928L1352 955Q1336 965 1336 945Z" />
        <circle cx="1315" cy="854" r="20" /><ellipse cx="1193" cy="818" rx="11" ry="19" /><ellipse cx="1317" cy="976" rx="20" ry="9" />
        <path d="M1375 775L1400 800V810L1365 778ZM1258 820l2 35h-4zM1303 890l30 12v4l-30-10z" />
      </g>
      <g fontFamily="Roboto" fill="#333" fontSize="30">
        <text transform="matrix(.95 .22 -.55 .8 1262 790)">Top</text>
        <text transform="matrix(.93 .22 0 1.2 1208 906)" fontSize="35">Front</text>
        <text transform="matrix(.65 -.5 0 1.1 1346 914)">Right</text>
      </g>
      <path d="M1165 810V962" stroke="#3434c8" strokeWidth="3.500" />
      <path d="M1165 962L1196 936" stroke="#1f8a2a" strokeWidth="3.500" /><path d="M1196 936L1255 885" stroke="#9fd6a4" strokeWidth="3" />
      <path d="M1165 962L1318 1006" stroke="#d03028" strokeWidth="3.500" />
      <text x="1154" y="799" fontFamily="Roboto" fontSize="42" textLength="20" lengthAdjust="spacingAndGlyphs" fill="#3a3ad0">Z</text>
      <text x="1257" y="885" fontFamily="Roboto" fontSize="36" textLength="19" lengthAdjust="spacingAndGlyphs" fill="#9fd6a4">Y</text>
      <text x="1333" y="1029" fontFamily="Roboto" fontSize="42" textLength="22" lengthAdjust="spacingAndGlyphs" fill="#e0443c">X</text>
      <path d="M1398 1046L1425 1038L1451 1046V1080L1425 1090L1398 1080Z" fill="#e6e6e6" stroke="#444" strokeWidth="3.500" />
      <path d="M1398 1046L1425 1055L1451 1046M1425 1055V1090" stroke="#777" strokeWidth="2.500" /><path d="M1425 1056L1450 1048V1079L1425 1088Z" fill="#bdbdbd" />
      <path d="M1477 1060H1499L1488 1071Z" fill="#222" />
    </svg>
  );
}

function Tool({ x, w = "w-[62px]", active = false, children }: { x: number; w?: string; active?: boolean; children: ReactNode }) {
  return (
    <div className={"h-[62px] shrink-0 rounded-[3px] border " + w + (active ? " border-[#ececee] bg-[#ececee]" : " border-[#f1f1f1]")}>
      <svg viewBox={`${x + 1} 938 ${w === "w-[62px]" ? 60 : 74} 60`} className="block h-full w-full" fill="none" stroke="#303236" strokeWidth={2.200}>{children}</svg>
    </div>
  );
}

function ViewToolbar() {
  return (
    <div className="flex h-[76px] w-[594px] gap-[10px] border-2 border-[#dcdcdc] p-[5px]">
      <Tool x={773}><path d="M785.500 965L804 952.500L822.500 965M789 963.500V983H798.500V972.500H809V983H819.500V963.500" strokeWidth={2.200} /></Tool>
      <Tool x={845} active>
        <path d="M880.500 957.500Q878 955 876 956.500Q873.500 958.500 873.500 962M871.500 964.500Q865 965 865 968Q865 970 869 971M873 972.500Q874 979.500 877 979.500Q880 979 880.500 974M881 964Q885 962.500 888 964" strokeWidth={2} />
        <path d="M870 961.500L876.500 963L873 967ZM869.500 968.500L874.500 971.500L869 973.500ZM880 958L882 955.500L881.500 960.500ZM878 975L883 973L882 978ZM880.500 965.500L885.500 962L886 968.500Z" fill="#303236" stroke="none" />
        <path d="M886.500 971V962Q888 959.500 889.500 962V968L892 966.500L894.500 968L897.500 968.500L899 971Q899.500 976 898 979Q896 983.500 891.500 983.500Q887 983 885 978.500L881.500 973.500Q883 972 886.500 975Z" fill="#fff" stroke="#333" strokeWidth={1.300} /><path d="M892.500 968v4M895.500 968.500v4" stroke="#333" strokeWidth={1} />
      </Tool>
      <Tool x={917}><path d="M948 958V978M939 968H957" strokeWidth={2.200} /><path d="M948 956l3.500 4h-7zM948 980l3.500-4h-7zM936.500 968l4-3.500v7zM959.500 968l-4-3.500v7z" fill="#303236" stroke="none" /></Tool>
      <Tool x={989} w="w-[76px]">
        <circle cx={1018.500} cy={968} r={7.500} strokeWidth={2.300} /><path d="M1023.500 973.500L1031 980.500" strokeWidth={2.800} />
        <path d="M1018.500 954l3.500 4h-7zM1018.500 982.500l3.500-4h-7zM1004.500 968l3.500-4v8zM1033 968l-3.500-4v8z" fill="#303236" stroke="none" />
        <path d="M1050.500 965.500L1055 970L1059.500 965.500" stroke="#777" strokeWidth={2} />
      </Tool>
      <Tool x={1075}>
        <path d="M1093 960V978Q1094 982 1098 983M1119.500 960V978Q1118 982 1114 983" /><path d="M1097.500 964Q1093 962 1093 959.500Q1094 954 1106 954T1119.500 959.500Q1119 962 1114.500 964" />
        <ellipse cx={1106} cy={961} rx={4.500} ry={2} strokeWidth={1.300} /><path d="M1098 983Q1101 977 1098.500 965L1103 962M1114 983Q1111 977 1113.500 965L1109 962M1103 963V981M1109 963V981" strokeWidth={1.200} />
        <path d="M1099 968l4 5M1099.500 973l3.500 4M1099 978l3 4M1100 964l3 4M1113 968l-4 5M1112.500 973l-3.500 4M1113 978l-3 4M1112 964l-3 4" strokeWidth={1.100} />
      </Tool>
      <Tool x={1147}><text x={1159.500} y={976} fontFamily="Roboto" fontWeight={800} fontSize={20.500} textLength={36} lengthAdjust="spacingAndGlyphs" fill="#000" stroke="none">BOM</text></Tool>
      <Tool x={1219}>
        <ellipse cx={1255} cy={962} rx={10.500} ry={6} /><ellipse cx={1255.500} cy={962} rx={5} ry={2.800} />
        <path d="M1244.500 962V968M1265.800 962V973Q1265 978.500 1258 978.500H1234.500V968.500H1252Q1262 969 1265 965M1239 978V974M1243 978V975M1247 978V974M1251 978V975M1255 978V974M1259 978V975" strokeWidth={1.800} />
      </Tool>
      <Tool x={1291}>
        <path d="M1310 979H1334" strokeWidth={3} /><path d="M1322 956V973M1311 957H1333M1315 973.500H1329M1314.500 957L1310.500 969.500M1314.500 957L1318.500 969.500M1329.500 957L1325.500 969.500M1329.500 957L1333.500 969.500" strokeWidth={1.500} />
        <path d="M1309.500 969h10q-1 4-5 4t-5-4zM1324.500 969h10q-1 4-5 4t-5-4z" fill="#303236" stroke="none" />
      </Tool>
    </div>
  );
}

function Viewport() {
  return (
    <div className="relative h-full flex-1">
      <div className="absolute top-[1px] left-[394px]"><Rover /></div>
      <div className="absolute top-[11px] left-[1544px]"><ViewCube /></div>
      <div className="absolute top-[399px] -left-px flex h-[34px] w-[33px] items-center justify-center border border-l-0 border-[#c4c4c4] bg-white">
        <svg viewBox="0 0 20 20" className="h-5 w-5" fill="none" stroke="#333" strokeWidth={1.300}><path d="M6 2H18.500M6 7.500H18.500M6 12.500H18.500M6 18H18.500" /><path d="M1 1L3.500 4L6 1M3.500 6V18" /></svg>
      </div>
      <div className="absolute top-[731px] left-[560px]"><ViewToolbar /></div>
      <div className="absolute top-[744px] left-[1421px] font-['Open_Sans','Noto_Sans_CJK_TC',sans-serif] font-light text-[#b0b0b0]">
        <Fit w={131} className="text-[21px] leading-[30px]">啟用 Windows</Fit>
        <Fit w={206} className="-mt-px text-[16px] leading-[18px]">移至 [設定] 以啟用 Windows。</Fit>
      </div>
    </div>
  );
}

function TabStrip() {
  return (
    <div className="flex h-[30px] items-start overflow-hidden bg-[#cfcfcf] font-[Roboto,'Liberation_Sans',sans-serif] text-[15px] text-[#4a4a4a]">
      <svg viewBox="0 0 17 16" className="mt-[7px] ml-[9px] h-4 w-[17px] shrink-0" fill="none" stroke="#444" strokeWidth={1.800}><path d="M0 1H16M11 6H16M11 11H14" /><circle cx="5.500" cy="8" r="3.800" /><path d="M8 11L12 15.500" /></svg>
      <div className="ml-[8px] flex h-[27px] w-[28px] items-center bg-[#e6e6e6]"><Fit w={22}>uter</Fit></div>
      {tabs.map(([n, w, k]) => {
        const on = n === "Rover Chassis";
        return (
          <div key={n} className={"flex h-[28px] shrink-0 items-center rounded-b-md border-r-2 border-l border-r-[#b8b8b8] border-l-[#f2f2f2] pb-px pl-[10px] " + (on ? "bg-[#f8f8f8] text-[#222] shadow-[inset_0_-3px_0_#2a6fc0]" : "bg-[#e6e6e6]")} style={{ width: w }}>
            {k === "st" && <StudioIcon />}
            {k === "asm" && <AsmIcon dark />}
            {k === "step" && <div className="flex h-[19px] w-[18px] items-center justify-center rounded-[2px] border-[1.5px] border-[#222] bg-[linear-gradient(transparent_32%,#222_32%)]"><Fit w={15} className="text-[7px] font-bold text-white">STEP</Fit></div>}
            {k === "img" && <svg viewBox="0 0 18 18" className="h-[18px] w-[18px]" fill="none" stroke="#222" strokeWidth={1.500}><rect x="1" y="1" width="16" height="16" rx="1.500" /><path d="M3 14L7 7L10 11L12 9L15 14Z" fill="#222" /><circle cx="12.500" cy="5" r="1.200" fill="#222" /></svg>}
            <Fit w={w - 41} className="ml-[3px]">{n}</Fit>
          </div>
        );
      })}
      <svg viewBox="0 0 44 27" className="h-[27px] w-[44px]" fill="none" strokeWidth={2.600}><path d="M14 8L8 14L14 20" stroke="#333" /><path d="M32 8L38 14L32 20" stroke="#666" /></svg>
    </div>
  );
}

function PlayerOverlay() {
  const sh = "drop-shadow-[0_0_1px_rgba(0,0,0,.7)]";
  return (
    <div className="absolute inset-0 text-[#eee]">
      <div className="absolute inset-x-0 top-0 h-[160px] bg-[linear-gradient(to_bottom,rgba(0,0,0,.58)_0,rgba(0,0,0,.54)_20px,rgba(0,0,0,.32)_54px,rgba(0,0,0,.1)_88px,rgba(0,0,0,.03)_120px,transparent_160px)]" />
      <div className="absolute inset-x-0 bottom-0 h-[170px] bg-[linear-gradient(to_bottom,transparent_0,rgba(0,0,0,.03)_40px,rgba(0,0,0,.09)_70px,rgba(0,0,0,.18)_90px,rgba(0,0,0,.31)_112px,rgba(0,0,0,.37)_122px,rgba(0,0,0,.54)_150px,#000_170px)]" />

      <div className="absolute top-[22px] left-[12px] flex items-start">
        <svg viewBox="0 0 60 60" className="h-[60px] w-[60px]"><defs><clipPath id="av"><circle cx="30" cy="30" r="30" /></clipPath></defs><g clipPath="url(#av)"><rect width="60" height="60" fill="#7e57c2" /><ellipse cx="30" cy="23.500" rx="10" ry="10" fill="#d9ccee" /><path d="M10 60V48Q12 38 30 38T50 48V60Z" fill="#d9ccee" /></g></svg>
        <Fit w={626} className={"-mt-px ml-[15px] text-[28px] leading-[64px] font-light " + sh}>
          國立虎尾科技大學 機械設計工程系 <span className="font-[Roboto] font-normal">40723154</span> 徐鵬皓
        </Fit>
      </div>
      <div className="absolute top-[20px] right-[29px] flex gap-[29px] text-[20px] leading-7 font-light">
        <div className="flex flex-col items-center">
          <svg viewBox="0 0 32 32" className={"h-8 w-8 " + sh}><circle cx="16" cy="16" r="15.500" fill="#eee" /><path d="M14.500 7V17L22 21.500" fill="none" stroke="#777" strokeWidth="3" /></svg>
          <Fit w={78} className={"mt-3 " + sh}>稍後觀看</Fit>
        </div>
        <div className="flex flex-col items-center">
          <svg viewBox="0 0 32 32" className={"h-8 w-8 " + sh}><path d="M1 29Q3 12 19 10V4L31 15L19 27V20Q8 20 1 29Z" fill="#eee" /></svg>
          <Fit w={39} className={"mt-3 " + sh}>分享</Fit>
        </div>
      </div>

      <div className="absolute top-[934px] left-[24px] flex h-[52px] w-[126px] items-center justify-center rounded bg-[rgba(28,28,28,.7)] pr-[2px] text-[25px] font-light">
        <Fit w={93}>更多影片</Fit>
      </div>
      <div className="absolute top-[1021px] left-[24px] flex h-[5px] w-[1872px] bg-[rgba(255,255,255,.2)]">
        <div className="w-[410px] bg-[#f00]" />
        <div className="w-[763px] bg-[rgba(255,255,255,.48)]" />
      </div>
      <div className="absolute top-[1036px] right-[39px] left-[48px] flex h-[34px] items-center">
        <svg viewBox="0 0 22 24" className={"h-6 w-[22px] " + sh}><path d="M1 1L21 12L1 23Z" fill="#eee" /></svg>
        <svg viewBox="0 0 28 28" className={"ml-[35px] h-7 w-7 " + sh} fill="#eee"><path d="M0 9H6L14 1V27L6 19H0Z" /><path d="M16 8Q21 14 16 20Z" /><path d="M16 2Q27 5 27 14T16 26V23Q24 20 24 14T16 5Z" /></svg>
        <Fit w={96} className={"ml-[19px] font-[Roboto] text-[20px] leading-8 " + sh}>0:24 / 1:50</Fit>
        <svg viewBox="0 0 28 22" className="ml-auto h-[22px] w-7"><rect width="28" height="22" rx="2.500" fill="#eee" /><path d="M4 11H8M11 11H24M4 16.500H17M20 16.500H24" stroke="#555" strokeWidth="2.600" /></svg>
        <div className="relative ml-[27px] h-6 w-[34px]">
          <svg viewBox="0 0 24 24" className="h-6 w-6" fill="#eee"><path d="M10 0h4l.6 3 2.400 1L19.700 2.500l2.600 2.800L20.500 8l1 2.200 2.500.8v3l-2.700.8-1 2.200 1.500 2.700-2.600 2.500-2.700-1.500-2.200 1L13.500 24h-3.600l-.8-2.500-2.200-1L4.200 22 1.600 19.500 3 17l-1-2.200-2-.8v-3l2.200-1 .8-2L1.600 5.300 4.200 2.500 7 4l2.400-1z" /></svg>
          <div className="absolute top-[-1px] left-[10px] flex h-[19px] w-6 items-center justify-center bg-[#f00] font-[Roboto] text-[13px] font-bold text-white">HD</div>
        </div>
        <Fit w={78} className={"ml-[18px] font-[Roboto] text-[29px] leading-8 font-extrabold tracking-tighter " + sh}>YouTube</Fit>
        <svg viewBox="0 0 24 24" className={"ml-[25px] h-6 w-6 " + sh} fill="none" stroke="#eee" strokeWidth="3.200"><path d="M0 7.500H7.500V0M16.500 0V7.500H24M0 16.500H7.500V24M16.500 24V16.500H24" /></svg>
      </div>
    </div>
  );
}

export default function App() {
  return (
    <div className="relative h-[1080px] w-[1920px] overflow-hidden bg-black font-['Open_Sans','Noto_Sans_CJK_TC',sans-serif]">
      <div className="flex h-full flex-col py-5">
        <BrowserChrome />
        <Header />
        <div className="flex min-h-0 flex-1 flex-col bg-white">
          <div className="flex h-[36px] shrink-0 items-center pl-[9px] font-[Roboto] text-[15px] font-bold text-[#444]"><Fit w={345}>This document was shared via a link and is view only.</Fit></div>
          <div className="flex min-h-0 flex-1">
            <Sidebar />
            <Viewport />
          </div>
          <TabStrip />
        </div>
      </div>
      <PlayerOverlay />
    </div>
  );
}
